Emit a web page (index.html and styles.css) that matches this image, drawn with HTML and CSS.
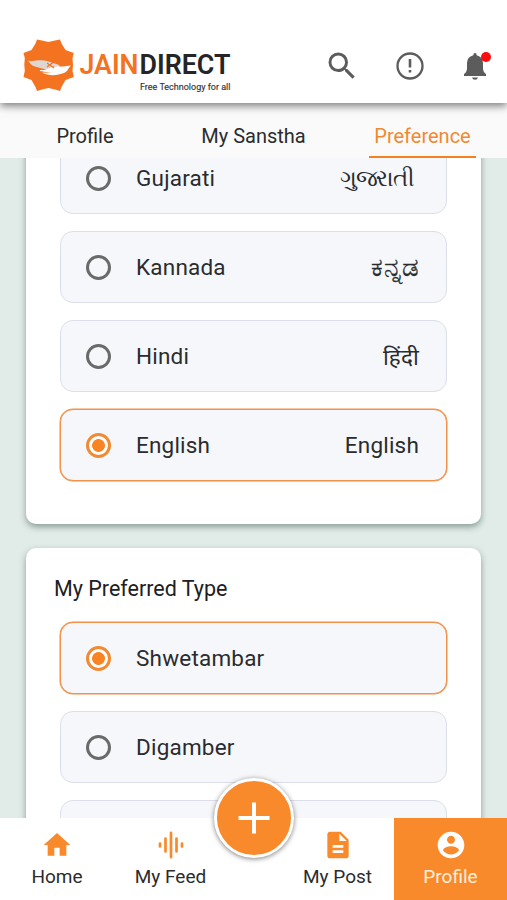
FILE: index.html
```html
<!DOCTYPE html>
<html lang="en">
<head>
<meta charset="utf-8">
<meta name="viewport" content="width=device-width, initial-scale=1">
<title>JainDirect Preferences</title>
<link rel="stylesheet" href="styles.css">
</head>
<body>
<div class="app">
  <header class="topbar">
    <svg class="logo" width="212" height="58" viewBox="0 0 212 58" role="img" aria-label="JainDirect">
      <path fill="#f37321" d="M15 2.500L20 3.500L26.500 5L33 3.500L38 2.500L39.500 6.500L43.500 13L51.800 16L50.500 21L51 28L50.500 34L51.800 40L43.500 43L39.500 50L38 54L33 52.500L26.500 51L20 52.500L15 54L13.500 50L9.500 43L1.500 40L2.800 34L2.300 28L2.800 21L1.500 16L9.500 13L13.500 6.500Z"/>
      <path fill="#ddd6d2" d="M6 23.500C8 24.500 10 24 14 23.500C18 23 22 23 25 24L36 27.500Q39 29 36.500 30.500L30 29L34 33L27 30.500L31 34L22 32L13 29.500C9 28.500 8 26 6 23.500Z"/>
      <path fill="#fff" d="M18 33C25 34 28 29.500 34 29.500C39 29.500 43 29.500 49 28.500C46 31 46 34.500 42 36C36 38 28 40 20 35.500L30 36L18 34Z"/>
      <path fill="none" stroke="#f37321" stroke-width="1.200" d="M25 26L32 31M31 25.500L25 30"/>
      <text class="logo-jain" x="57.500" y="37" textLength="59" lengthAdjust="spacingAndGlyphs">JAIN</text>
      <text class="logo-direct" x="117.500" y="37" textLength="91" lengthAdjust="spacingAndGlyphs">DIRECT</text>
      <text class="logo-tag" x="118" y="53" textLength="90.500" lengthAdjust="spacingAndGlyphs">Free Technology for all</text>
    </svg>
    <div class="actions">
      <svg width="36" height="36" viewBox="0 0 24 24"><path fill="#5c5c5c" d="M15.500 14h-.79l-.28-.27A6.471 6.471 0 0 0 16 9.500 6.500 6.500 0 1 0 9.500 16c1.610 0 3.090-.59 4.230-1.570l.27.28v.79l5 4.990L20.490 19l-4.990-5zm-6 0C7.010 14 5 11.990 5 9.500S7.010 5 9.500 5 14 7.010 14 9.500 11.990 14 9.500 14z"/></svg>
      <svg width="28" height="28" viewBox="0 0 28 28"><circle cx="14" cy="14" r="12.500" fill="none" stroke="#5c5c5c" stroke-width="2.300"/><path fill="#5c5c5c" d="M12.700 7h2.600v8.500h-2.600zM12.700 18h2.600v2.600h-2.600z"/></svg>
      <div class="bell">
        <svg width="24" height="28" viewBox="0 0 24 28"><path fill="#5c5c5c" d="M12 1Q13.700 1 13.700 3.200Q20 5 20 11V16Q20 20 23 22V24H1V22Q4 20 4 16V11Q4 5 10.300 3.200Q10.300 1 12 1ZM9 25.500H15Q14.500 27.800 12 27.800T9 25.500Z"/></svg>
        <span class="dot"></span>
      </div>
    </div>
  </header>
  <nav class="tabs">
    <a class="tab">Profile</a>
    <a class="tab">My Sanstha</a>
    <a class="tab active"><span>Preference</span></a>
  </nav>
  <main class="content">
    <section class="card languages">
      <div class="option"><i class="radio"></i><span>Gujarati</span><span class="native gujarati">ગુજરાતી</span></div>
      <div class="option"><i class="radio"></i><span>Kannada</span><span class="native kannada">ಕನ್ನಡ</span></div>
      <div class="option"><i class="radio"></i><span>Hindi</span><span class="native hindi">हिंदी</span></div>
      <div class="option selected"><i class="radio"></i><span>English</span><span class="native">English</span></div>
    </section>
    <section class="card types">
      <h2>My Preferred Type</h2>
      <div class="option selected"><i class="radio"></i><span>Shwetambar</span></div>
      <div class="option"><i class="radio"></i><span>Digamber</span></div>
      <div class="option"></div>
    </section>
  </main>
  <footer class="bottomnav">
    <a class="item"><svg width="32" height="32" viewBox="0 0 24 24"><path fill="#f98a2b" d="M10 20v-6h4v6h5v-8h3L12 3 2 12h3v8z"/></svg><span>Home</span></a>
    <a class="item"><svg width="28" height="32" viewBox="0 0 28 32"><path stroke="#f98a2b" stroke-width="2.700" stroke-linecap="round" d="M3 14.500v3M8.500 9.500v13M14 3.800v24.400M19.500 9.500v13M25 14.500v3"/></svg><span>My Feed</span></a>
    <a class="item"><svg width="32" height="32" viewBox="0 0 24 24"><path fill="#f98a2b" d="M14 2H6c-1.100 0-1.990.9-1.990 2L4 20c0 1.100.89 2 1.990 2H18c1.100 0 2-.9 2-2V8l-6-6zm2 16H8v-2h8v2zm0-4H8v-2h8v2zm-3-5V3.500L18.500 9H13z"/></svg><span>My Post</span></a>
    <a class="item current"><svg width="32" height="32" viewBox="0 0 24 24"><path fill="#fff" d="M12 2C6.480 2 2 6.480 2 12s4.480 10 10 10 10-4.480 10-10S17.520 2 12 2zm0 3c1.660 0 3 1.340 3 3s-1.340 3-3 3-3-1.340-3-3 1.340-3 3-3zm0 14.200c-2.500 0-4.710-1.280-6-3.220.03-1.990 4-3.080 6-3.080 1.990 0 5.970 1.090 6 3.080-1.290 1.940-3.500 3.220-6 3.220z"/></svg><span>Profile</span></a>
    <button class="fab" aria-label="Add"><svg width="32" height="32" viewBox="0 0 32 32"><path stroke="#fff" stroke-width="4" d="M16 .5v31M.5 16h31"/></svg></button>
  </footer>
</div>
</body>
</html>
```
FILE: styles.css
```css
* { box-sizing: border-box; }
body {
  margin: 0;
  font-family: Roboto, "Noto Sans", sans-serif;
  color: #2b2b2d;
}
.app {
  width: 507px;
  height: 900px;
  display: flex;
  flex-direction: column;
  overflow: hidden;
  background: #fff;
}
.topbar {
  flex: none;
  height: 103px;
  padding: 37px 16px 0 22px;
  display: flex;
  justify-content: space-between;
  background: #fff;
  position: relative;
  z-index: 2;
  box-shadow: 0 3px 8px rgba(0, 0, 0, .5);
}
.logo { display: block; overflow: visible; }
.logo-jain, .logo-direct { font-size: 27.500px; font-weight: 600; }
.logo-jain { fill: #f37321; }
.logo-direct { fill: #252527; }
.logo-tag { font-size: 9.800px; fill: #333; stroke: #333; stroke-width: .15px; }
.actions {
  display: flex;
  align-items: center;
  height: 58px;
  gap: 36px;
}
.actions svg { display: block; }
.bell { position: relative; margin-left: 3px; margin-right: 4px; }
.dot {
  position: absolute;
  top: 0;
  right: -4px;
  width: 10px;
  height: 10px;
  border-radius: 50%;
  background: #fd0d0d;
}
.tabs {
  flex: none;
  height: 55px;
  padding-top: 7px;
  display: grid;
  grid-template-columns: repeat(3, 1fr);
  background: #fafafa;
  position: relative;
  z-index: 1;
}
.tab {
  display: flex;
  justify-content: center;
  font-size: 20px;
  line-height: 52px;
}
.tab:first-child { padding-left: 1px; }
.tab.active { color: #f2892f; }
.tab.active span {
  width: 107px;
  height: 48px;
  text-align: center;
  border-bottom: 2.500px solid #f58220;
}
.content {
  height: 660px;
  overflow: hidden;
  padding: 0 26px;
  background: #e1ebe8;
}
.card {
  background: #fff;
  border-radius: 10px;
  padding: 0 34px;
  box-shadow: 0 3px 6px rgba(50, 80, 68, .5);
  display: flex;
  flex-direction: column;
  gap: 17px;
}
.languages { margin-top: -16px; padding-bottom: 43px; }
.types { margin-top: 24px; }
.types h2 {
  margin: 0 -6px;
  height: 57px;
  padding-top: 26px;
  line-height: 30px;
  font-size: 21.500px;
  font-weight: 400;
  color: #202022;
}
.option {
  height: 72px;
  flex: none;
  display: flex;
  align-items: center;
  padding: 0 27px 0 25px;
  border: 1px solid #dcdfe9;
  border-radius: 13px;
  background: #f5f7fb;
  font-size: 22.500px;
  letter-spacing: .2px;
}
.selected { border: 1px solid #f2924a; box-shadow: 0 0 0 .5px #f2924a; }
.radio {
  width: 25px;
  height: 25px;
  margin-right: 25px;
  border: 3px solid #6a6a6a;
  border-radius: 50%;
}
.selected .radio {
  border-color: #f18a33;
  background: radial-gradient(circle, #f98423 6px, #fff 6.800px);
}
.native { margin-left: auto; }
.gujarati { margin-right: 5px; font-size: 22.500px; letter-spacing: -1.200px; }
.kannada { font-size: 26px; line-height: 30px; -webkit-text-stroke: .3px #2b2b2d; }
.bottomnav {
  flex: none;
  height: 82px;
  display: grid;
  grid-template-columns: 114px 113px 54px 113px 113px;
  background: #fff;
  position: relative;
  z-index: 2;
}
.item {
  display: flex;
  flex-direction: column;
  align-items: center;
  padding-top: 11px;
  font-size: 19px;
  line-height: 32px;
}
.item svg { display: block; }
.item:nth-of-type(3) { grid-column: 4; }
.current { background: #f98a2b; color: #fff0df; }
.fab {
  position: absolute;
  left: 214px;
  top: -40px;
  width: 80px;
  height: 80px;
  padding: 0;
  display: grid;
  place-items: center;
  border: 3px solid #fff;
  border-radius: 50%;
  background: #f98a2b;
  box-shadow: 0 1px 5px rgba(0, 0, 0, .5);
}
```
